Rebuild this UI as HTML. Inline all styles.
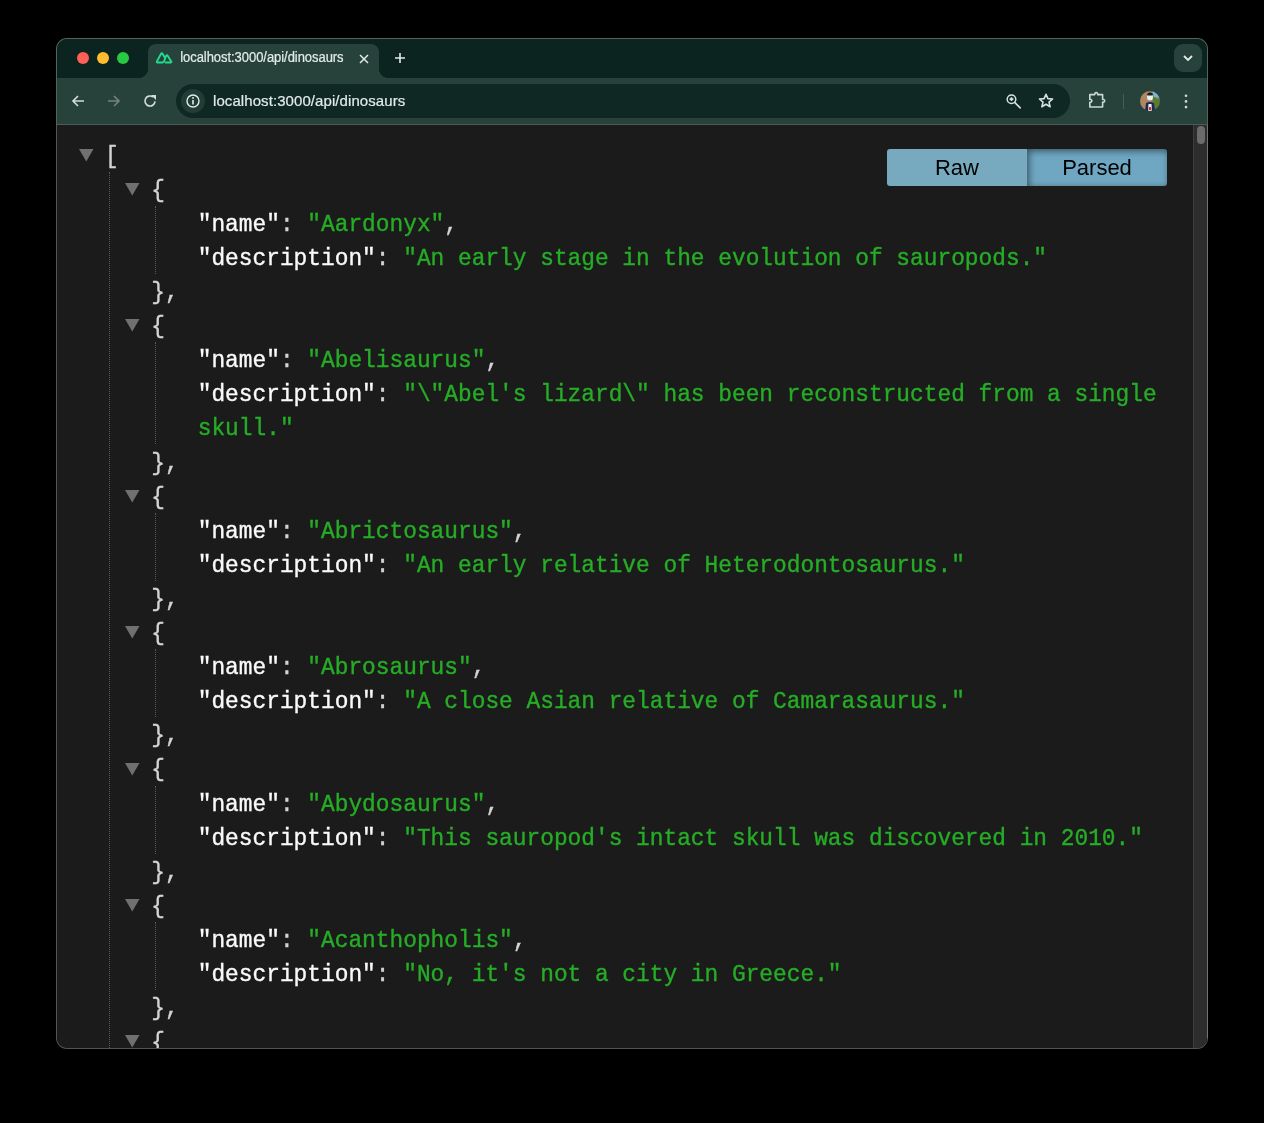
<!DOCTYPE html>
<html><head><meta charset="utf-8">
<style>
*{margin:0;padding:0;box-sizing:border-box}
html,body{width:1264px;height:1123px;background:#000;overflow:hidden}
body{position:relative;font-family:"Liberation Sans",sans-serif}
.frame{position:absolute;left:56px;top:38px;width:1152px;height:1011px;border-radius:11px;background:linear-gradient(#56625e 0,#56625e 87px,#545454 87px)}
.rb{position:absolute;left:1207px;top:125px;width:1px;height:913px;background:#737373}
.win{position:absolute;left:57px;top:39px;width:1150px;height:1009px;border-radius:10px;overflow:hidden;background:#0b2420;will-change:transform}
.strip{position:absolute;left:0;top:0;width:1150px;height:40px;background:#0b2420}
.light{position:absolute;top:13px;width:12px;height:12px;border-radius:50%}
.tab{position:absolute;left:91px;top:5px;width:231px;height:34px;background:#27423b;border-radius:8px 8px 0 0}
.tab:before,.tab:after{content:"";position:absolute;bottom:0;width:10px;height:10px}
.tab:before{left:-10px;background:radial-gradient(circle at 0 0,transparent 10px,#27423b 10.5px)}
.tab:after{right:-10px;background:radial-gradient(circle at 100% 0,transparent 10px,#27423b 10.5px)}
.tabtxt{position:absolute;left:32.2px;top:6px;font-size:13px;color:#e3ebe8;letter-spacing:-0.05px;white-space:nowrap;transform:scaleY(1.1);transform-origin:0 12px;-webkit-text-stroke:0.2px #e3ebe8}
.toolbar{position:absolute;left:0;top:39px;width:1150px;height:47px;background:#27423b;border-bottom:1px solid #4c5b57}
.omni{position:absolute;left:119px;top:6px;width:894px;height:34px;border-radius:17px;background:#0f2823}
.infobg{position:absolute;left:5px;top:5px;width:24px;height:24px;border-radius:50%;background:#213d36}
.omnitxt{position:absolute;left:37px;top:8px;font-size:15px;color:#e3ebe8;white-space:nowrap;letter-spacing:0.08px;-webkit-text-stroke:0.2px #e3ebe8}
.ico{position:absolute}
.content{position:absolute;left:0;top:86px;width:1150px;height:924px;background:#1b1b1b;overflow:hidden}
.sb{position:absolute;left:1136px;top:0;width:14px;height:924px;background:#2d2d2d;border-left:1px solid #3e3e3e}
.thumb{position:absolute;left:3px;top:1px;width:8px;height:18px;border-radius:4px;background:#6b6b6b}
.ln{position:absolute;height:34.08px;line-height:34.08px;font-family:"Liberation Mono",monospace;font-size:22.83px;white-space:pre;color:#e6e6e6}
.ln span{position:relative;top:1.9px}
.ln{transform:scaleY(1.08);transform-origin:0 26px;-webkit-text-stroke:0.35px currentColor}
.ln span{-webkit-text-stroke:0.35px}
.k{color:#fafafa}
.p{color:#d4d4d4}
.s{color:#26ad26}
.tri{position:absolute}
.dot{position:absolute;width:1px;border-left:1px dotted #5a5a5a}
.btns{position:absolute;left:830px;top:24px;width:280px;height:37px}
.btn{position:absolute;top:0;height:37px;width:140px;font-size:22px;color:#000;text-align:center;line-height:37px;background:#77a9bf}
.raw{left:0;border-radius:3px 0 0 3px}
.parsed{left:140px;border-radius:0 3px 3px 0;background:#6fa7c3;box-shadow:inset 2px 2px 7px rgba(0,0,0,0.5)}
</style></head><body>
<div class="frame"></div>
<div class="rb"></div>
<div class="win">
  <div class="strip">
    <div class="light" style="left:20px;background:#fe5f57"></div>
    <div class="light" style="left:40px;background:#febc2e"></div>
    <div class="light" style="left:60px;background:#28c840"></div>
    <div class="tab">
      <svg class="ico" style="left:8px;top:8px" width="17" height="13" viewBox="0 0 17 13"><path d="M6.3 10.5 H1.4 Q0.3 10.5 0.9 9.4 L5.1 1.7 Q5.8 0.5 6.5 1.7 L9.1 6 Q8.4 10.3 6.3 10.5 Z M9.1 6 L10.3 3.8 Q11 2.6 11.7 3.8 L15.2 9.4 Q15.8 10.5 14.7 10.5 H9.6" fill="none" stroke="#22dc8e" stroke-width="1.9" stroke-linejoin="round" stroke-linecap="round"/></svg>
      <div class="tabtxt">localhost:3000/api/dinosaurs</div>
      <svg class="ico" style="left:211px;top:9.5px" width="10" height="10" viewBox="0 0 10 10"><path d="M1 1 L9 9 M9 1 L1 9" stroke="#e3ebe8" stroke-width="1.5"/></svg>
    </div>
    <svg class="ico" style="left:338px;top:14px" width="10" height="10" viewBox="0 0 10 10"><path d="M5 0 V10 M0 5 H10" stroke="#e3ebe8" stroke-width="1.6"/></svg>
    <div style="position:absolute;left:1117px;top:5px;width:28px;height:28px;border-radius:9px;background:#27423b"></div>
    <svg class="ico" style="left:1125px;top:14px" width="12" height="10" viewBox="0 0 12 10"><path d="M2 3 L6 7 L10 3" fill="none" stroke="#e3ebe8" stroke-width="1.8"/></svg>
  </div>
  <div class="toolbar">
    <svg class="ico" style="left:14px;top:55px;top:16px" width="14" height="14" viewBox="0 0 14 14"><path d="M13 7 H2 M7 2 L2 7 L7 12" fill="none" stroke="#d2dcd8" stroke-width="1.6"/></svg>
    <svg class="ico" style="left:50px;top:16px" width="14" height="14" viewBox="0 0 14 14"><path d="M1 7 H12 M7 2 L12 7 L7 12" fill="none" stroke="#75837f" stroke-width="1.6"/></svg>
    <svg class="ico" style="left:86px;top:16px" width="14" height="14" viewBox="0 0 14 14"><path d="M12 7.2 A5 5 0 1 1 10 3" fill="none" stroke="#d2dcd8" stroke-width="1.6"/><path d="M8 1 H13 V6 Z" fill="#d2dcd8"/></svg>
    <div class="omni">
      <div class="infobg"></div>
      <svg class="ico" style="left:10px;top:10px" width="14" height="14" viewBox="0 0 14 14"><circle cx="7" cy="7" r="6" fill="none" stroke="#e3ebe8" stroke-width="1.4"/><path d="M7 6 V10.5" stroke="#e3ebe8" stroke-width="1.6"/><circle cx="7" cy="4" r="0.9" fill="#e3ebe8"/></svg>
      <div class="omnitxt">localhost:3000/api/dinosaurs</div>
      <svg class="ico" style="left:829px;top:8.5px" width="17" height="17" viewBox="0 0 17 17"><circle cx="6.5" cy="6.2" r="4.3" fill="none" stroke="#d5e3de" stroke-width="1.5"/><path d="M9.6 9.4 L15.2 14.9" stroke="#d5e3de" stroke-width="1.6" stroke-linecap="round"/><path d="M6.5 4.3 V8.1 M4.6 6.2 H8.4" stroke="#d5e3de" stroke-width="1.7"/></svg>
      <svg class="ico" style="left:862px;top:9px" width="16" height="16" viewBox="0 0 16 16"><path d="M8 1.3 L9.9 5.6 L14.6 6 L11 9.1 L12.1 13.8 L8 11.3 L3.9 13.8 L5 9.1 L1.4 6 L6.1 5.6 Z" fill="none" stroke="#d5e3de" stroke-width="1.6" stroke-linejoin="round"/></svg>
    </div>
    <svg class="ico" style="left:1031px;top:13px" width="18" height="18" viewBox="0 0 18 18"><path d="M1.8 3.6 H6.8 A1.5 1.5 0 1 1 9.6 3.6 H14.6 V8.4 A1.5 1.5 0 1 1 14.6 11.2 V16 H1.8 V11.2 A1.5 1.5 0 1 0 1.8 8.4 Z" fill="none" stroke="#c9dad4" stroke-width="1.6" stroke-linejoin="round"/></svg>
    <div style="position:absolute;left:1066px;top:16px;width:1px;height:15px;background:#435e56"></div>
    <svg class="ico" style="left:1083px;top:13px" width="20" height="20" viewBox="0 0 20 20"><defs><clipPath id="av"><circle cx="10" cy="10" r="10"/></clipPath><filter id="avb"><feGaussianBlur stdDeviation="0.45"/></filter></defs><g clip-path="url(#av)"><g filter="url(#avb)"><rect width="20" height="20" fill="#9a7a55"/><rect x="0" y="0" width="8" height="20" fill="#b08660"/><rect x="11" y="0" width="9" height="20" fill="#6f8a4a"/><path d="M12 0 L20 0 L20 7 L14 6 Z" fill="#7fb0d8"/><path d="M13 6 L20 9 L20 20 L14 20 Z" fill="#5a7a35"/><ellipse cx="10" cy="6" rx="3" ry="3.6" fill="#e8eef2"/><path d="M7 3 Q10 0 13 3 L12.5 4.5 L7.5 4.5 Z" fill="#1a1a22"/><path d="M5 20 L6 12 Q10 10 14 12 L15 20 Z" fill="#1e2a55"/><path d="M8 20 L8.5 13 L11.5 13 L12 20 Z" fill="#f2f2f2"/><path d="M9 16 L11 16 L11.5 19 L8.5 19 Z" fill="#c03040"/></g></g></svg>
    <svg class="ico" style="left:1127px;top:16px" width="4" height="15" viewBox="0 0 4 15"><circle cx="2" cy="1.7" r="1.3" fill="#cfdcd7"/><circle cx="2" cy="7.4" r="1.3" fill="#cfdcd7"/><circle cx="2" cy="13.1" r="1.3" fill="#cfdcd7"/></svg>
  </div>
  <div class="content">
<div class="ln" style="top:12.60px;left:47.90px"><span class="p">[</span></div>
<div class="ln" style="top:46.70px;left:94.30px"><span class="p">{</span></div>
<div class="ln" style="top:80.80px;left:140.70px"><span class="k">"name"</span><span class="p">: </span><span class="s">"Aardonyx"</span><span class="p">,</span></div>
<div class="ln" style="top:114.90px;left:140.70px"><span class="k">"description"</span><span class="p">: </span><span class="s">"An early stage in the evolution of sauropods."</span></div>
<div class="ln" style="top:149.00px;left:94.30px"><span class="p">},</span></div>
<div class="ln" style="top:183.10px;left:94.30px"><span class="p">{</span></div>
<div class="ln" style="top:217.20px;left:140.70px"><span class="k">"name"</span><span class="p">: </span><span class="s">"Abelisaurus"</span><span class="p">,</span></div>
<div class="ln" style="top:251.30px;left:140.70px"><span class="k">"description"</span><span class="p">: </span><span class="s">"\"Abel's lizard\" has been reconstructed from a single</span></div>
<div class="ln" style="top:285.40px;left:140.70px"><span class="s">skull."</span></div>
<div class="ln" style="top:319.50px;left:94.30px"><span class="p">},</span></div>
<div class="ln" style="top:353.60px;left:94.30px"><span class="p">{</span></div>
<div class="ln" style="top:387.70px;left:140.70px"><span class="k">"name"</span><span class="p">: </span><span class="s">"Abrictosaurus"</span><span class="p">,</span></div>
<div class="ln" style="top:421.80px;left:140.70px"><span class="k">"description"</span><span class="p">: </span><span class="s">"An early relative of Heterodontosaurus."</span></div>
<div class="ln" style="top:455.90px;left:94.30px"><span class="p">},</span></div>
<div class="ln" style="top:490.00px;left:94.30px"><span class="p">{</span></div>
<div class="ln" style="top:524.10px;left:140.70px"><span class="k">"name"</span><span class="p">: </span><span class="s">"Abrosaurus"</span><span class="p">,</span></div>
<div class="ln" style="top:558.20px;left:140.70px"><span class="k">"description"</span><span class="p">: </span><span class="s">"A close Asian relative of Camarasaurus."</span></div>
<div class="ln" style="top:592.30px;left:94.30px"><span class="p">},</span></div>
<div class="ln" style="top:626.40px;left:94.30px"><span class="p">{</span></div>
<div class="ln" style="top:660.50px;left:140.70px"><span class="k">"name"</span><span class="p">: </span><span class="s">"Abydosaurus"</span><span class="p">,</span></div>
<div class="ln" style="top:694.60px;left:140.70px"><span class="k">"description"</span><span class="p">: </span><span class="s">"This sauropod's intact skull was discovered in 2010."</span></div>
<div class="ln" style="top:728.70px;left:94.30px"><span class="p">},</span></div>
<div class="ln" style="top:762.80px;left:94.30px"><span class="p">{</span></div>
<div class="ln" style="top:796.90px;left:140.70px"><span class="k">"name"</span><span class="p">: </span><span class="s">"Acanthopholis"</span><span class="p">,</span></div>
<div class="ln" style="top:831.00px;left:140.70px"><span class="k">"description"</span><span class="p">: </span><span class="s">"No, it's not a city in Greece."</span></div>
<div class="ln" style="top:865.10px;left:94.30px"><span class="p">},</span></div>
<div class="ln" style="top:899.20px;left:94.30px"><span class="p">{</span></div>
<svg class="tri" style="top:23.80px;left:21.75px" width="15" height="13"><polygon points="0,0 14.5,0 7.25,12.6" fill="#707070"/></svg>
<svg class="tri" style="top:57.90px;left:67.75px" width="15" height="13"><polygon points="0,0 14.5,0 7.25,12.6" fill="#707070"/></svg>
<svg class="tri" style="top:194.30px;left:67.75px" width="15" height="13"><polygon points="0,0 14.5,0 7.25,12.6" fill="#707070"/></svg>
<svg class="tri" style="top:364.80px;left:67.75px" width="15" height="13"><polygon points="0,0 14.5,0 7.25,12.6" fill="#707070"/></svg>
<svg class="tri" style="top:501.20px;left:67.75px" width="15" height="13"><polygon points="0,0 14.5,0 7.25,12.6" fill="#707070"/></svg>
<svg class="tri" style="top:637.60px;left:67.75px" width="15" height="13"><polygon points="0,0 14.5,0 7.25,12.6" fill="#707070"/></svg>
<svg class="tri" style="top:774.00px;left:67.75px" width="15" height="13"><polygon points="0,0 14.5,0 7.25,12.6" fill="#707070"/></svg>
<svg class="tri" style="top:910.40px;left:67.75px" width="15" height="13"><polygon points="0,0 14.5,0 7.25,12.6" fill="#707070"/></svg>
<div class="dot" style="top:80.80px;left:98.00px;height:68.20px"></div>
<div class="dot" style="top:217.20px;left:98.00px;height:102.30px"></div>
<div class="dot" style="top:387.70px;left:98.00px;height:68.20px"></div>
<div class="dot" style="top:524.10px;left:98.00px;height:68.20px"></div>
<div class="dot" style="top:660.50px;left:98.00px;height:68.20px"></div>
<div class="dot" style="top:796.90px;left:98.00px;height:68.20px"></div>
<div class="dot" style="top:933.30px;left:98.00px;height:40.00px"></div>
<div class="dot" style="top:46.70px;left:52.00px;height:928.30px"></div>
    <div class="btns"><div class="btn raw">Raw</div><div class="btn parsed">Parsed</div></div>
    <div class="sb"><div class="thumb"></div></div>
  </div>
</div>
</body></html>
